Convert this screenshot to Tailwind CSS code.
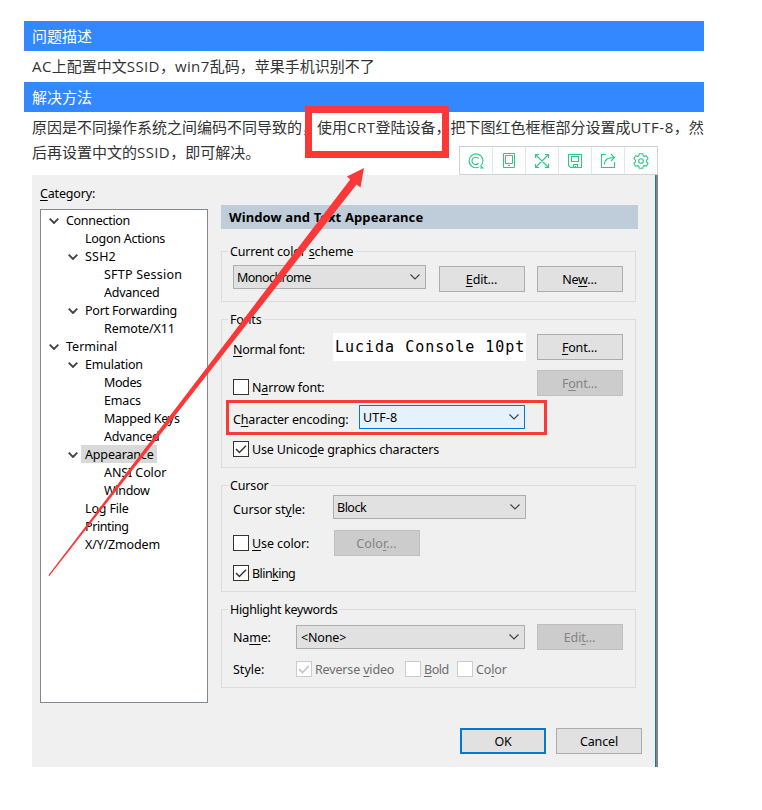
<!DOCTYPE html>
<html lang="zh-CN">
<head>
<meta charset="utf-8">
<title>CRT</title>
<script src="https://cdn.jsdelivr.net/npm/@tailwindcss/browser@4"></script>
</head>
<body class="relative bg-white w-[762px] h-[810px] overflow-hidden">
<main class="ml-6 pt-[21px] w-[680px] font-['Open_Sans','Noto_Sans_CJK_SC',sans-serif] text-[15px] text-[#333]">
  <h2 class="h-[30px] leading-[30px] pl-2 bg-[#3388ff] text-white">问题描述</h2>
  <p class="h-[31px] leading-[31px] pl-2 whitespace-nowrap"><span class="tracking-[0.4px]">AC</span>上配置中文<span class="tracking-[0.4px]">SSID</span>，<span class="tracking-[0.4px]">win7</span>乱码，苹果手机识别不了</p>
  <h2 class="h-[30px] leading-[30px] pl-2 bg-[#3388ff] text-white">解决方法</h2>
  <div class="h-[63px] pt-[3px] pl-2 leading-[25px] whitespace-nowrap">
    <p>原因是不同操作系统之间编码不同导致的，使用<span class="tracking-[0.5px]">CRT</span>登陆设备，把下图红色框框部分设置成<span class="tracking-[0.6px]">UTF-8</span>，然</p>
    <p>后再设置中文的<span class="tracking-[0.4px]">SSID</span>，即可解决。</p>
  </div>

  <!-- Session options dialog -->
  <div class="ml-2 w-[626px] h-[592px] flex bg-[#f0f0f0] border-r-2 border-[#858585] text-black font-['Noto_Sans',sans-serif] text-[12.5px] leading-[18px] tracking-[-0.16px] whitespace-nowrap">
    <div class="w-[623px] flex shrink-0">
      <div class="ml-2 w-[168px] shrink-0">
        <div class="h-[34px] pt-[10px]"><u class="underline-offset-2">C</u>ategory:</div>
        <ul class="h-[494px] border border-[#828790] bg-white pt-[2px]">
          <li class="flex items-center h-[18px] pl-2"><svg class="w-[10px] h-[6px] mr-[7px]" viewBox="0 0 10 6" fill="none" stroke="#444" stroke-width="1.9"><path d="M.7.7 5 5 9.3.7"/></svg><span class="tracking-[-0.3px]">Connection</span></li>
          <li class="h-[18px] pl-11 tracking-[-0.25px]">Logon Actions</li>
          <li class="flex items-center h-[18px] pl-[27px]"><svg class="w-[10px] h-[6px] mr-[7px]" viewBox="0 0 10 6" fill="none" stroke="#444" stroke-width="1.9"><path d="M.7.7 5 5 9.3.7"/></svg><span class="tracking-[0.2px]">SSH2</span></li>
          <li class="h-[18px] pl-[63px] tracking-[0.22px]">SFTP Session</li>
          <li class="h-[18px] pl-[63px] tracking-[-0.25px]">Advanced</li>
          <li class="flex items-center h-[18px] pl-[27px]"><svg class="w-[10px] h-[6px] mr-[7px]" viewBox="0 0 10 6" fill="none" stroke="#444" stroke-width="1.9"><path d="M.7.7 5 5 9.3.7"/></svg><span class="tracking-[-0.22px]">Port Forwarding</span></li>
          <li class="h-[18px] pl-[63px] tracking-[-0.1px]">Remote/X11</li>
          <li class="flex items-center h-[18px] pl-2"><svg class="w-[10px] h-[6px] mr-[7px]" viewBox="0 0 10 6" fill="none" stroke="#444" stroke-width="1.9"><path d="M.7.7 5 5 9.3.7"/></svg><span class="tracking-normal">Terminal</span></li>
          <li class="flex items-center h-[18px] pl-[27px]"><svg class="w-[10px] h-[6px] mr-[7px]" viewBox="0 0 10 6" fill="none" stroke="#444" stroke-width="1.9"><path d="M.7.7 5 5 9.3.7"/></svg><span class="tracking-[-0.2px]">Emulation</span></li>
          <li class="h-[18px] pl-[63px] tracking-[-0.4px]">Modes</li>
          <li class="h-[18px] pl-[63px]">Emacs</li>
          <li class="h-[18px] pl-[63px] tracking-[-0.27px]">Mapped Keys</li>
          <li class="h-[18px] pl-[63px] tracking-[-0.25px]">Advanced</li>
          <li class="flex items-center h-[18px] pl-[27px]"><svg class="w-[10px] h-[6px] mr-[3px]" viewBox="0 0 10 6" fill="none" stroke="#444" stroke-width="1.9"><path d="M.7.7 5 5 9.3.7"/></svg><span class="w-[76px] h-[18px] -mt-[2px] leading-5 pl-1 bg-[#d9d9d9]">Appearance</span></li>
          <li class="h-[18px] pl-[63px] tracking-[-0.1px]">ANSI Color</li>
          <li class="h-[18px] pl-[63px] tracking-[-0.3px]">Window</li>
          <li class="h-[18px] pl-11">Log File</li>
          <li class="h-[18px] pl-11 tracking-[-0.4px]">Printing</li>
          <li class="h-[18px] pl-11">X/Y/Zmodem</li>
        </ul>
      </div>

      <div class="ml-[13px] w-[421px] pt-[30px] shrink-0">
        <h3 class="w-[417px] h-6 leading-6 pl-2 bg-[#bfcddb] font-bold text-[13px] tracking-[0.12px]">Window and Text Appearance</h3>

        <section class="relative mt-[22px] w-[415px] h-[51px] border border-[#dcdcdc] flex pl-[11px] pt-[13px]">
          <div class="absolute left-[6px] -top-[9px] px-[2px] bg-[#f0f0f0]">Current color <u class="underline-offset-2">s</u>cheme</div>
          <div class="w-[193px] h-6 border border-[#adadad] bg-[#e1e1e1] flex items-center justify-between pl-[3px] pr-[5px]"><span class="pt-[2px] tracking-[-0.55px]">Monochrome</span><svg class="w-[10px] h-[6px]" viewBox="0 0 10 6" fill="none" stroke="#444" stroke-width="1.2"><path d="M.5.5 5 5 9.5.5"/></svg></div>
          <div class="ml-[13px] mt-[1px] w-[86px] h-[26px] leading-[26px] pr-px border border-[#adadad] bg-[#e1e1e1] text-center"><u class="underline-offset-2">E</u>dit...</div>
          <div class="ml-3 mt-[1px] w-[86px] h-[26px] leading-[26px] pr-px border border-[#adadad] bg-[#e1e1e1] text-center">Ne<u class="underline-offset-2">w</u>...</div>
        </section>

        <section class="relative mt-[17px] w-[415px] h-[149px] border border-[#dcdcdc] pl-[11px] pt-[13px]">
          <div class="absolute left-[6px] -top-[9px] px-[2px] bg-[#f0f0f0]">Fonts</div>
          <div class="flex h-7">
            <div class="w-[100px] pt-2 tracking-[-0.25px]"><u class="underline-offset-2">N</u>ormal font:</div>
            <div class="w-[193px] h-7 leading-7 pl-[2px] bg-white font-['DejaVu_Sans_Mono',monospace] text-[15px] tracking-[0.99px] overflow-hidden">Lucida Console 10pt</div>
            <div class="ml-[11px] mt-[1px] w-[86px] h-[26px] leading-[26px] pr-px border border-[#adadad] bg-[#e1e1e1] text-center"><u class="underline-offset-2">F</u>ont...</div>
          </div>
          <div class="flex h-[35px] mt-[9px]">
            <div class="mt-[9px] size-4 border border-[#333] bg-white"></div>
            <div class="ml-[3px] mt-[9px] w-[285px]">N<u class="underline-offset-2">a</u>rrow font:</div>
            <div class="w-[86px] h-[26px] leading-[26px] pr-px border border-[#bfbfbf] bg-[#cccccc] text-[#838383] text-center">F<u class="underline-offset-2">o</u>nt...</div>
          </div>
          <div class="flex h-6">
            <div class="w-[126px] pt-[6px]">C<u class="underline-offset-2">h</u>aracter encoding:</div>
            <div class="w-[166px] h-6 border border-[#0078d7] bg-[#e5f1fb] flex items-center justify-between pl-[3px] pr-[5px]"><span class="pt-[2px] tracking-[0.1px]">UTF-8</span><svg class="w-[10px] h-[6px]" viewBox="0 0 10 6" fill="none" stroke="#444" stroke-width="1.2"><path d="M.5.5 5 5 9.5.5"/></svg></div>
          </div>
          <div class="flex items-center h-4 mt-3">
            <svg class="size-4 border border-[#333] bg-white" viewBox="0 0 14 14" fill="none" stroke="#333" stroke-width="1.4"><path d="m2 7 3.4 3.5L12 3.7"/></svg>
            <div class="ml-[3px] pt-[2px]">Use Unico<u class="underline-offset-2">d</u>e graphics characters</div>
          </div>
          <div class="absolute left-[4px] top-[80px] w-[321px] h-[35px] border-[3px] border-[#fb3838]"></div>
        </section>

        <section class="relative mt-[17px] w-[415px] h-[107px] border border-[#dcdcdc] pl-[11px] pt-[9px]">
          <div class="absolute left-[6px] -top-[9px] px-[2px] bg-[#f0f0f0]">Cursor</div>
          <div class="flex h-[35px]">
            <div class="w-[100px] pt-[6px] tracking-[-0.1px]">Cursor st<u class="underline-offset-2">y</u>le:</div>
            <div class="w-[193px] h-6 border border-[#adadad] bg-[#e1e1e1] flex items-center justify-between pl-[3px] pr-[5px]"><span class="pt-[2px] tracking-[-0.5px]">Block</span><svg class="w-[10px] h-[6px]" viewBox="0 0 10 6" fill="none" stroke="#444" stroke-width="1.2"><path d="M.5.5 5 5 9.5.5"/></svg></div>
          </div>
          <div class="flex h-[26px] items-center">
            <div class="size-4 border border-[#333] bg-white"></div>
            <div class="ml-[3px] w-[82px] pt-[2px] tracking-[-0.1px]"><u class="underline-offset-2">U</u>se color:</div>
            <div class="w-[86px] h-[26px] leading-[26px] pr-px tracking-[0.1px] border border-[#bfbfbf] bg-[#cccccc] text-[#838383] text-center">Colo<u class="underline-offset-2">r</u>...</div>
          </div>
          <div class="flex items-center h-4 mt-[9px]">
            <svg class="size-4 border border-[#333] bg-white" viewBox="0 0 14 14" fill="none" stroke="#333" stroke-width="1.4"><path d="m2 7 3.4 3.5L12 3.7"/></svg>
            <div class="ml-[3px] pt-[2px] tracking-[-0.55px]">Blin<u class="underline-offset-2">k</u>ing</div>
          </div>
        </section>

        <section class="relative mt-[17px] w-[415px] h-[79px] border border-[#dcdcdc] pl-[11px] pt-[14px]">
          <div class="absolute left-[6px] -top-[9px] px-[2px] bg-[#f0f0f0] tracking-[-0.33px]">Highlight keywords</div>
          <div class="flex h-[26px] items-center">
            <div class="w-[63px] pt-[2px]">Na<u class="underline-offset-2">m</u>e:</div>
            <div class="w-[229px] h-6 border border-[#adadad] bg-[#e1e1e1] flex items-center justify-between pl-1 pr-[5px]"><span class="pt-[2px]">&lt;None&gt;</span><svg class="w-[10px] h-[6px]" viewBox="0 0 10 6" fill="none" stroke="#444" stroke-width="1.2"><path d="M.5.5 5 5 9.5.5"/></svg></div>
            <div class="ml-3 w-[86px] h-[26px] leading-[26px] pr-px border border-[#bfbfbf] bg-[#cccccc] text-[#838383] text-center">Edi<u class="underline-offset-2">t</u>...</div>
          </div>
          <div class="flex items-center h-4 mt-[11px] text-[#6d6d6d]">
            <div class="w-[63px] pt-[2px] tracking-normal text-black">Style:</div>
            <svg class="size-4 border border-[#ccc] bg-white" viewBox="0 0 14 14" fill="none" stroke="#c4c4c4" stroke-width="1.6"><path d="m2 7 3.4 3.5L12 3.7"/></svg>
            <div class="ml-[3px] w-[90px] pt-[2px]">Reverse <u class="underline-offset-2">v</u>ideo</div>
            <div class="size-4 border border-[#ccc] bg-white"></div>
            <div class="ml-[3px] w-[33px] pt-[2px] tracking-[-0.5px]"><u class="underline-offset-2">B</u>old</div>
            <div class="size-4 border border-[#ccc] bg-white"></div>
            <div class="ml-[3px] pt-[2px]">Co<u class="underline-offset-2">l</u>or</div>
          </div>
        </section>

        <div class="flex justify-end gap-[10px] mt-10">
          <div class="w-[86px] h-[26px] leading-[23px] border-2 border-[#0078d7] bg-[#e1e1e1] text-center">OK</div>
          <div class="w-[86px] h-[26px] leading-[25px] border border-[#adadad] bg-[#e1e1e1] text-center">Cancel</div>
        </div>
      </div>
    </div>
    <div class="w-px h-full bg-[#1874ae]"></div>
  </div>
</main>

<!-- Floating picture toolbar -->
<div class="absolute left-[459px] top-[146px] w-[199px] h-[29px] border border-[#ccd5d2] bg-white flex divide-x divide-[#e2e6e5] text-[#2cc882]">
  <div class="flex-1 flex items-center justify-center"><svg class="size-4" viewBox="0 0 16 16" fill="none" stroke="currentColor" stroke-width="1.1"><path d="M10.800 14.100A6.900 6.900 0 1 1 13.300 12.200M12.300 12.300l2.700 2.700h-3M10.600 5.600a3.700 3.700 0 1 0 0 4.600"/></svg></div>
  <div class="flex-1 flex items-center justify-center"><svg class="size-4" viewBox="0 0 16 16" fill="none" stroke="currentColor" stroke-width="1"><path d="M2.5.5h11v14h-11zM4.500 2.500h7v8h-7zM7 12.500h2"/></svg></div>
  <div class="flex-1 flex items-center justify-center"><svg class="size-4" viewBox="0 0 16 16" fill="none" stroke="currentColor" stroke-width="1.1"><path d="M2 2 14 14M14 2 2 14M1.500 5V1.500H5M11 1.500h3.500V5M1.500 11v3.500H5M11 14.500h3.500V11"/></svg></div>
  <div class="flex-1 flex items-center justify-center"><svg class="size-4" viewBox="0 0 16 16" fill="none" stroke="currentColor" stroke-width="1.1"><path d="M1.5 1.5h13v13h-11l-2-2zM4.5 3.5h7v5h-7zM6.500 14.500v-3h4v3M8.500 13v1"/></svg></div>
  <div class="flex-1 flex items-center justify-center"><svg class="size-4" viewBox="0 0 16 16" fill="none" stroke="currentColor" stroke-width="1.1"><path d="M6 1.5H1.5v13h13V9M4.5 11.5C4.5 6 8 4.5 14 4.500M11 1l3.500 3.500L11 8"/></svg></div>
  <div class="flex-1 flex items-center justify-center"><svg class="size-4" viewBox="0 0 16 16" fill="none" stroke="currentColor" stroke-width="1.1" stroke-linejoin="round"><path d="M6.300.700h3.400l.500 2 1.200.700 2-.600 1.700 2.900-1.500 1.400v1.800l1.500 1.400-1.700 2.900-2-.600-1.200.700-.500 2H6.300l-.500-2-1.200-.700-2 .600L.900 10.300l1.500-1.400V7.100L.900 5.700l1.700-2.900 2 .600 1.200-.700z"/><circle cx="8" cy="8" r="2.300"/></svg></div>
</div>

<!-- Red annotations -->
<div class="absolute left-[305px] top-[106px] w-[144px] h-[52px] border-[7px] border-[#fb3838]"></div>
<svg class="absolute left-0 top-0 w-[762px] h-[810px] pointer-events-none" viewBox="0 0 762 810" fill="#fb3838"><path d="M48.300 575.200 350.200 179.400 347 176.500 364 168 360.500 187.500 356.600 184.400 49.300 576z"/></svg>
</body>
</html>
